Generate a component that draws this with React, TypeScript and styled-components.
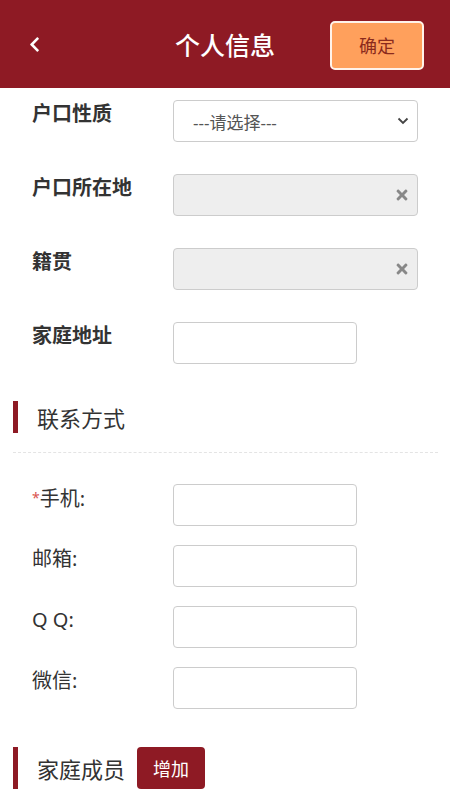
import React from 'react';
import styled, { createGlobalStyle } from 'styled-components';
import { FaChevronLeft, FaTimes } from 'react-icons/fa';

const GlobalStyle = createGlobalStyle`
  body {
    margin: 0;
    background: #fff;
    font-family: "Noto Sans", "Noto Sans CJK SC", sans-serif;
    color: #333;
  }
`;

const PRIMARY = '#8e1a24';

const App: React.FC = () => {
  return (
    <Page>
      <GlobalStyle />
      <Header>
        <BackButton aria-label="返回">
          <FaChevronLeft size={17} />
        </BackButton>
        <Title>个人信息</Title>
        <ConfirmButton>确定</ConfirmButton>
      </Header>

      <Form>
        <Row>
          <Label bold>户口性质</Label>
          <SelectBox>
            <span>---请选择---</span>
            <svg width="12" height="8" viewBox="0 0 12 8">
              <path d="M1.5 1.5 L6 6 L10.5 1.5" fill="none" stroke="#444" strokeWidth="1.8" />
            </svg>
          </SelectBox>
        </Row>
        <Row>
          <Label bold>户口所在地</Label>
          <ReadonlyField>
            <FaTimes size={16} />
          </ReadonlyField>
        </Row>
        <Row>
          <Label bold>籍贯</Label>
          <ReadonlyField>
            <FaTimes size={16} />
          </ReadonlyField>
        </Row>
        <Row>
          <Label bold>家庭地址</Label>
          <TextInput />
        </Row>
      </Form>

      <SectionHead>
        <SectionTitle>联系方式</SectionTitle>
      </SectionHead>
      <Divider />

      <ContactForm>
        <Row>
          <Label><Required>*</Required>手机:</Label>
          <TextInput />
        </Row>
        <Row>
          <Label>邮箱:</Label>
          <TextInput />
        </Row>
        <Row>
          <Label>Q Q:</Label>
          <TextInput />
        </Row>
        <Row>
          <Label>微信:</Label>
          <TextInput />
        </Row>
      </ContactForm>

      <SectionHead tall>
        <SectionTitle>家庭成员</SectionTitle>
        <AddButton>增加</AddButton>
      </SectionHead>
    </Page>
  );
};

const Page = styled.div`
  width: 450px;
  min-height: 801px;
  background: #fff;
`;

const Header = styled.header`
  height: 88px;
  background: ${PRIMARY};
  display: flex;
  align-items: center;
  justify-content: space-between;
  padding: 0 26px 0 22px;
  box-sizing: border-box;
  position: relative;
`;

const BackButton = styled.button`
  border: none;
  background: transparent;
  color: #fff;
  padding: 4px;
  display: flex;
  align-items: center;
  cursor: pointer;
`;

const Title = styled.h1`
  margin: 0;
  position: absolute;
  left: 0;
  right: 0;
  text-align: center;
  font-size: 25px;
  font-weight: 500;
  color: #fff;
  pointer-events: none;
`;

const ConfirmButton = styled.button`
  width: 94px;
  height: 49px;
  margin-top: 2px;
  background: #ffa05c;
  border: 2px solid #fff3ea;
  border-radius: 5px;
  color: #8b2a1c;
  font-family: inherit;
  font-size: 18px;
  cursor: pointer;
`;

const Form = styled.div`
  display: flex;
  flex-direction: column;
  gap: 32px;
  padding: 12px 32px 0;
`;

const ContactForm = styled.div`
  display: flex;
  flex-direction: column;
  gap: 19px;
  padding: 31px 32px 0;
`;

const Row = styled.div`
  display: flex;
  align-items: flex-start;
`;

const Label = styled.label<{ bold?: boolean }>`
  width: 141px;
  flex-shrink: 0;
  padding-top: 1px;
  line-height: 26px;
  font-size: 20px;
  font-weight: ${p => (p.bold ? 700 : 400)};
  color: #333;
`;

const Required = styled.span`
  color: #d9534f;
  font-size: 14px;
  vertical-align: 3px;
`;

const fieldBase = `
  height: 42px;
  box-sizing: border-box;
  border: 1px solid #ccc;
  border-radius: 4px;
`;

const SelectBox = styled.div`
  ${fieldBase}
  flex: 1;
  display: flex;
  align-items: center;
  justify-content: space-between;
  padding: 0 8px 0 19px;
  background: #fff;
  font-size: 17px;
  color: #555;
`;

const ReadonlyField = styled.div`
  ${fieldBase}
  flex: 1;
  display: flex;
  align-items: center;
  justify-content: flex-end;
  padding-right: 7px;
  background: #eee;
  color: #888;
`;

const TextInput = styled.input`
  ${fieldBase}
  width: 184px;
  padding: 0 10px;
  background: #fff;
  font-size: 16px;
  outline: none;
`;

const SectionHead = styled.div<{ tall?: boolean }>`
  margin: ${p => (p.tall ? '38px' : '37px')} 0 0 13px;
  border-left: 5px solid ${PRIMARY};
  display: flex;
  align-items: center;
  gap: 12px;
  height: ${p => (p.tall ? '42px' : '32px')};
  padding-left: 19px;
`;

const SectionTitle = styled.h2`
  margin: 0;
  font-size: 22px;
  font-weight: 400;
  color: #333;
`;

const AddButton = styled.button`
  height: 42px;
  padding: 0 16px;
  border: none;
  border-radius: 4px;
  background: ${PRIMARY};
  color: #fff;
  font-family: inherit;
  font-size: 18px;
  cursor: pointer;
`;

const Divider = styled.hr`
  margin: 19px 12px 0 13px;
  border: none;
  border-top: 1px dashed #e4e4e4;
`;

export default App;
